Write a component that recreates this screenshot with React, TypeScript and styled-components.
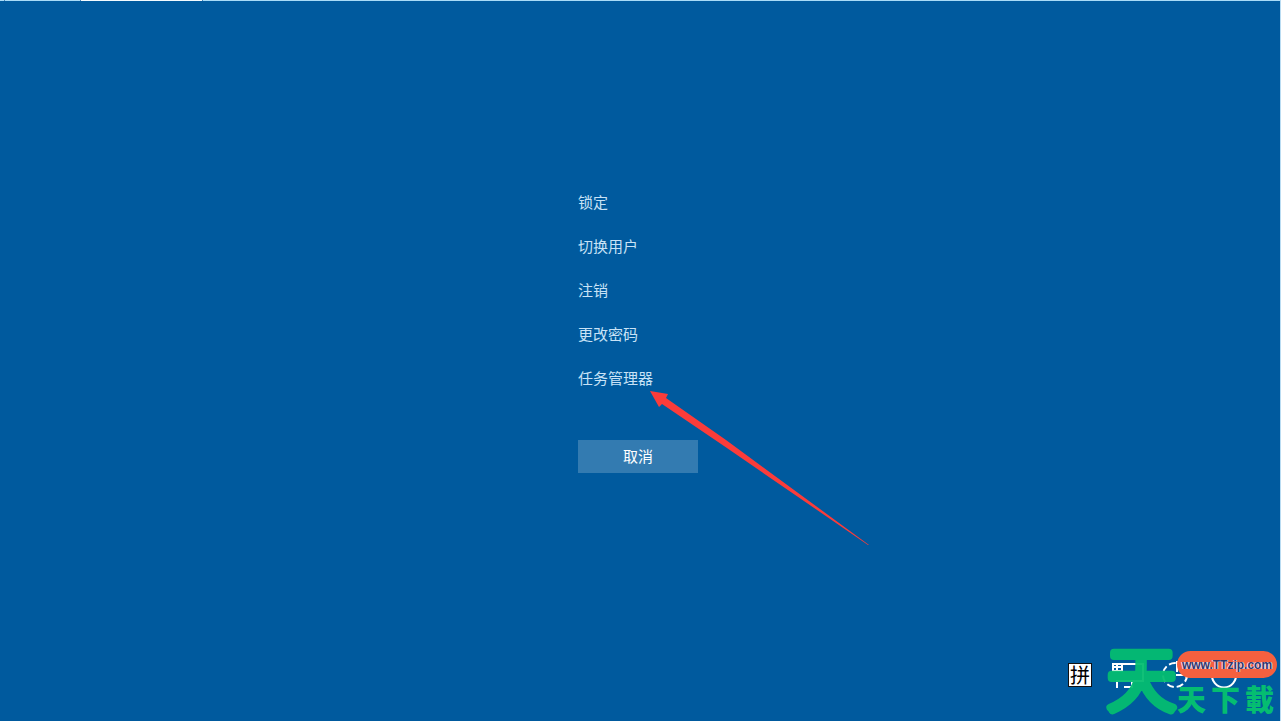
import React from 'react';
import styled, { createGlobalStyle } from 'styled-components';

const GlobalStyle = createGlobalStyle`
  * { box-sizing: border-box; }
  body {
    margin: 0;
    background: #005a9e;
    font-family: "Noto Sans CJK SC", "Liberation Sans", sans-serif;
    overflow: hidden;
  }
`;

const Screen = styled.div`
  position: relative;
  display: flex;
  flex-direction: column;
  min-height: 100vh;
  background: #005a9e;
  border-right: 1px solid #b9dcf2;
`;

const TopEdge = styled.div`
  display: flex;
  gap: 1px;
  height: 1px;
  background: #4a86b8;
`;

const EdgeSegment = styled.div<{ $width?: number; $bright?: boolean }>`
  flex: ${(p) => (p.$width ? `0 0 ${p.$width}px` : '1')};
  background: ${(p) => (p.$bright ? '#f4fbff' : '#a9dcf8')};
`;

const Main = styled.main`
  flex: 1;
  padding-top: 25vh;
`;

const Menu = styled.nav`
  position: relative;
  width: 124px;
  margin: 0 auto;
`;

const Options = styled.ul`
  list-style: none;
  margin: 0 0 39px;
  padding: 0;
`;

const Option = styled.button`
  display: block;
  width: 100%;
  height: 44px;
  padding: 0 0 2px;
  border: 0;
  background: none;
  color: #c8e2f6;
  font: 400 15px/42px "Noto Sans CJK SC", sans-serif;
  text-align: left;
  white-space: nowrap;
`;

const Cancel = styled.button`
  width: 120px;
  height: 33px;
  padding: 0 0 2px;
  border: 0;
  background: #337bb1;
  color: #fff;
  font: 400 15px/31px "Noto Sans CJK SC", sans-serif;
`;

const Arrow = styled.svg`
  position: absolute;
  left: 72px;
  top: 209px;
  pointer-events: none;
`;

const Tray = styled.footer`
  display: flex;
  align-items: center;
  justify-content: flex-end;
  height: 32px;
  margin: 0 42px 30px 0;
`;

const ImeBadge = styled.button`
  width: 24px;
  height: 24px;
  margin-right: 20px;
  padding: 0;
  border: 1px solid #111;
  background: #fff;
  color: #000;
  font: 400 20px/20px "Noto Sans CJK SC", sans-serif;
`;

const IconButton = styled.button<{ $gap?: number }>`
  display: flex;
  margin-right: ${(p) => p.$gap ?? 0}px;
  padding: 0;
  border: 0;
  background: none;
`;

const Watermark = styled.a`
  position: absolute;
  right: 0;
  bottom: 0;
  display: flex;
  width: 174px;
  height: 76px;
  color: #05bd71;
  text-decoration: none;
`;

const BigMark = styled.svg`
  flex: none;
  opacity: 0.95;
  overflow: visible;

  text {
    font: 300 69px "Noto Sans CJK SC", sans-serif;
    fill: #05bd71;
    stroke: #05bd71;
    stroke-width: 8px;
    stroke-linejoin: round;
  }
`;

const MarkColumn = styled.span`
  display: flex;
  flex: 1;
  flex-direction: column;
  padding-top: 6px;
`;

const Address = styled.span`
  height: 27px;
  margin-right: 3px;
  border-radius: 14px;
  background: #f5603f;
  color: #303870;
  font: 700 12px/28px "Liberation Sans", sans-serif;
  text-align: center;
  text-shadow: 1px 0 #f4d8e0, -1px 0 #f4d8e0;
`;

const SiteName = styled.span`
  display: flex;
  justify-content: space-between;
  margin-right: 6px;
  font: 900 29px/40px "Noto Sans CJK TC", "Noto Sans CJK SC", sans-serif;
`;

const options = ['锁定', '切换用户', '注销', '更改密码', '任务管理器'];

const NetworkIcon = () => (
  <svg width="32" height="28" viewBox="0 0 32 28" fill="none" stroke="#fff" strokeWidth="2">
    <path d="M1 11V3H31V20H10M1 10H10V3M1 6H10M5 3V10" />
    <path d="M5 27V20H20V26H12" />
  </svg>
);

const EaseIcon = () => (
  <svg width="28" height="28" viewBox="0 0 28 28" fill="none" stroke="#fff" strokeWidth="2">
    <path d="M15 0V11M14 14H27M24 11L27 14L24 17" />
    <circle cx="13" cy="14" r="12" strokeDasharray="7 3" />
  </svg>
);

const PowerIcon = () => (
  <svg width="28" height="28" viewBox="0 0 28 28" fill="none" stroke="#fff" strokeWidth="2">
    <path d="M14 1V12M8 4A12 12 0 1 0 20 4" />
  </svg>
);

export default function App() {
  return (
    <Screen>
      <GlobalStyle />
      <TopEdge>
        <EdgeSegment $width={4} />
        <EdgeSegment $width={75} />
        <EdgeSegment $width={121} $bright />
        <EdgeSegment />
      </TopEdge>
      <Main>
        <Menu>
          <Options>
            {options.map((label) => (
              <li key={label}>
                <Option type="button">{label}</Option>
              </li>
            ))}
          </Options>
          <Cancel type="button">取消</Cancel>
          <Arrow width="220" height="158" viewBox="0 0 220 158" aria-hidden="true">
            <path d="M0 1L18 4L16 8L76 50L219 155L218 155L74 56L12 14L9 17Z" fill="#fb3c3a" />
          </Arrow>
        </Menu>
      </Main>
      <Tray>
        <ImeBadge type="button">拼</ImeBadge>
        <IconButton type="button" aria-label="网络" $gap={18}>
          <NetworkIcon />
        </IconButton>
        <IconButton type="button" aria-label="轻松使用" $gap={20}>
          <EaseIcon />
        </IconButton>
        <IconButton type="button" aria-label="电源">
          <PowerIcon />
        </IconButton>
      </Tray>
      <Watermark href="#">
        <BigMark width="71" height="76" viewBox="0 0 71 76">
          <text x="1" y="60">天</text>
        </BigMark>
        <MarkColumn>
          <Address>www.TTzip.com</Address>
          <SiteName>
            <span>天</span>
            <span>下</span>
            <span>載</span>
          </SiteName>
        </MarkColumn>
      </Watermark>
    </Screen>
  );
}
